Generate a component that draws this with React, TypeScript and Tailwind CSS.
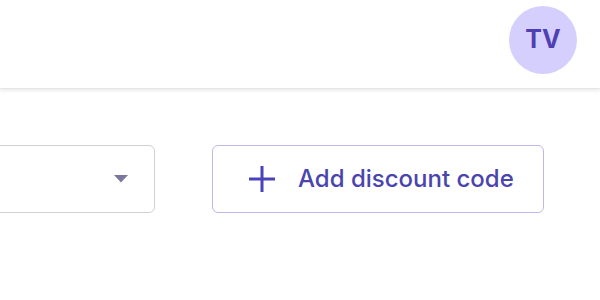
export default function App() {
  return (
    <div className="w-[600px] h-[300px] bg-white overflow-hidden relative" style={{ fontFamily: "Inter, 'Noto Sans', sans-serif" }}>
      <div className="h-[89px] flex justify-end items-start pr-[23px] pt-[6px] shadow-[0_2px_3px_rgba(0,0,0,0.08)] border-b border-[#e6e6e6]">
        <div className="w-[68px] h-[68px] rounded-full bg-[#d5cffd] flex items-center justify-center text-[25px] font-bold text-[#4e40b3]">TV</div>
      </div>
      <div className="flex items-start pt-[56px] gap-[57px] ml-[-200px]">
        <div className="w-[355px] h-[68px] border border-[#cfcfd4] rounded-[6px] flex items-center justify-end pr-[26px]">
          <svg width="14" height="8" viewBox="0 0 14 8"><path d="M0 0 H14 L7 7.5 Z" fill="#7a779f" /></svg>
        </div>
        <button className="w-[332px] h-[68px] border border-[#bdb8ec] rounded-[6px] flex items-center pl-[35px] text-[#4a44ae] text-[24px] font-medium">
          <svg width="28" height="28" viewBox="0 0 28 28" className="mr-[22px]">
            <path d="M14 1 V27 M1 14 H27" stroke="#4842bb" strokeWidth="3" fill="none" />
          </svg>
          Add discount code
        </button>
      </div>
    </div>
  );
}
